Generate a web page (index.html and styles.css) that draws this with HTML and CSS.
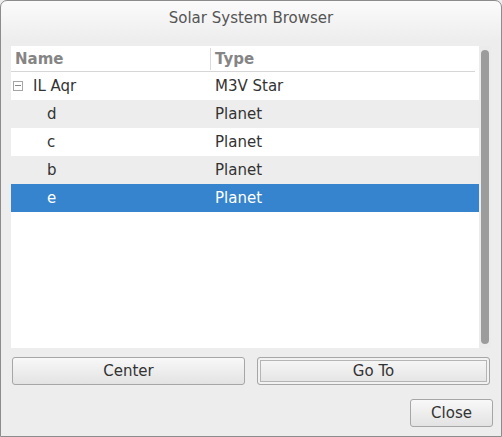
FILE: index.html
```html
<!DOCTYPE html>
<html>
<head>
<meta charset="utf-8">
<link rel="stylesheet" href="styles.css">
</head>
<body>
<div class="window">
  <div class="titlebar">Solar System Browser</div>
  <div class="content">
    <div class="tree">
      <div class="tree-list">
        <div class="header">
          <div class="col-name">Name</div>
          <div class="col-type">Type</div>
        </div>
        <div class="row">
          <div class="col-name parent"><span class="expander"></span>IL Aqr</div>
          <div class="col-type">M3V Star</div>
        </div>
        <div class="row alt">
          <div class="col-name child">d</div>
          <div class="col-type">Planet</div>
        </div>
        <div class="row">
          <div class="col-name child">c</div>
          <div class="col-type">Planet</div>
        </div>
        <div class="row alt">
          <div class="col-name child">b</div>
          <div class="col-type">Planet</div>
        </div>
        <div class="row selected">
          <div class="col-name child">e</div>
          <div class="col-type">Planet</div>
        </div>
      </div>
      <div class="scrollbar"><div class="thumb"></div></div>
    </div>
    <div class="actions">
      <button class="btn">Center</button>
      <button class="btn default">Go To</button>
    </div>
    <div class="footer">
      <button class="btn close">Close</button>
    </div>
  </div>
</div>
</body>
</html>
```
FILE: styles.css
```css
* { box-sizing: border-box; }
html, body { margin: 0; padding: 0; background: #ededed; }
body {
  width: 502px;
  height: 437px;
  font-family: "DejaVu Sans", sans-serif;
  font-size: 15px;
  color: #333;
}
.window {
  width: 502px;
  height: 437px;
  border: 1px solid #8c8c8c;
  border-radius: 7px 7px 0 0;
  background: linear-gradient(#fbfbfb 0, #ededed 40px, #ededed 100%);
  display: flex;
  flex-direction: column;
  overflow: hidden;
}
.titlebar {
  height: 35px;
  display: flex;
  align-items: center;
  justify-content: center;
  color: #555;
  font-size: 15px;
  padding-bottom: 1px;
}
.content {
  padding: 10px 10px 9px 10px;
  display: flex;
  flex-direction: column;
  flex: 1;
}
.tree {
  height: 302px;
  display: flex;
  background: #fff;
}
.tree-list {
  flex: 1;
  display: flex;
  flex-direction: column;
}
.header {
  height: 26px;
  display: flex;
  border-bottom: 1px solid #d6d6d6;
  font-weight: bold;
  color: #858585;
  margin-right: 4px;
}
.header .col-name {
  width: 200px;
  border-right: 1px solid #dadada;
  margin: 2px 0 1px;
  padding-left: 4px;
  padding-bottom: 1px;
}
.header .col-type { padding-left: 4px; }
.header > div { display: flex; align-items: center; }
.row {
  height: 28px;
  display: flex;
  align-items: center;
  color: #333;
}
.row.alt { background: #ededed; }
.row.selected { background: #3584cd; color: #fff; }
.col-name { width: 199px; display: flex; align-items: center; }
.col-type { padding-left: 5px; flex: 1; }
.parent { padding-left: 2px; }
.child { padding-left: 36px; }
.expander {
  width: 10px;
  height: 10px;
  border: 1px solid #a6a6a6;
  margin-right: 10px;
  position: relative;
  background: #fff;
}
.expander::after {
  content: "";
  position: absolute;
  left: 1px;
  right: 1px;
  top: 3px;
  height: 1px;
  background: #888;
}
.scrollbar {
  width: 12px;
  background: #ebebeb;
  padding: 4px 2px 4px 2px;
  display: flex;
}
.thumb {
  flex: 1;
  background: #9c9c9c;
  border-radius: 4px;
}
.actions {
  margin-top: 9px;
  display: flex;
  gap: 12px;
  padding: 0 1px;
}
.btn {
  font-family: "DejaVu Sans", sans-serif;
  font-size: 15px;
  color: #333;
  height: 28px;
  border: 1px solid #a6a6a6;
  border-radius: 3px;
  background: linear-gradient(#f8f8f8, #e3e3e3);
  padding: 0 0 0 0;
  margin: 0;
}
.actions .btn { flex: 1; }
.btn.default {
  box-shadow: inset 0 0 0 2px #f2f2f2, inset 0 0 0 3px #b5b5b5;
}
.footer {
  margin-top: 14px;
  display: flex;
  justify-content: flex-end;
  margin-right: -2px;
}
.btn.close { width: 83px; }
```
